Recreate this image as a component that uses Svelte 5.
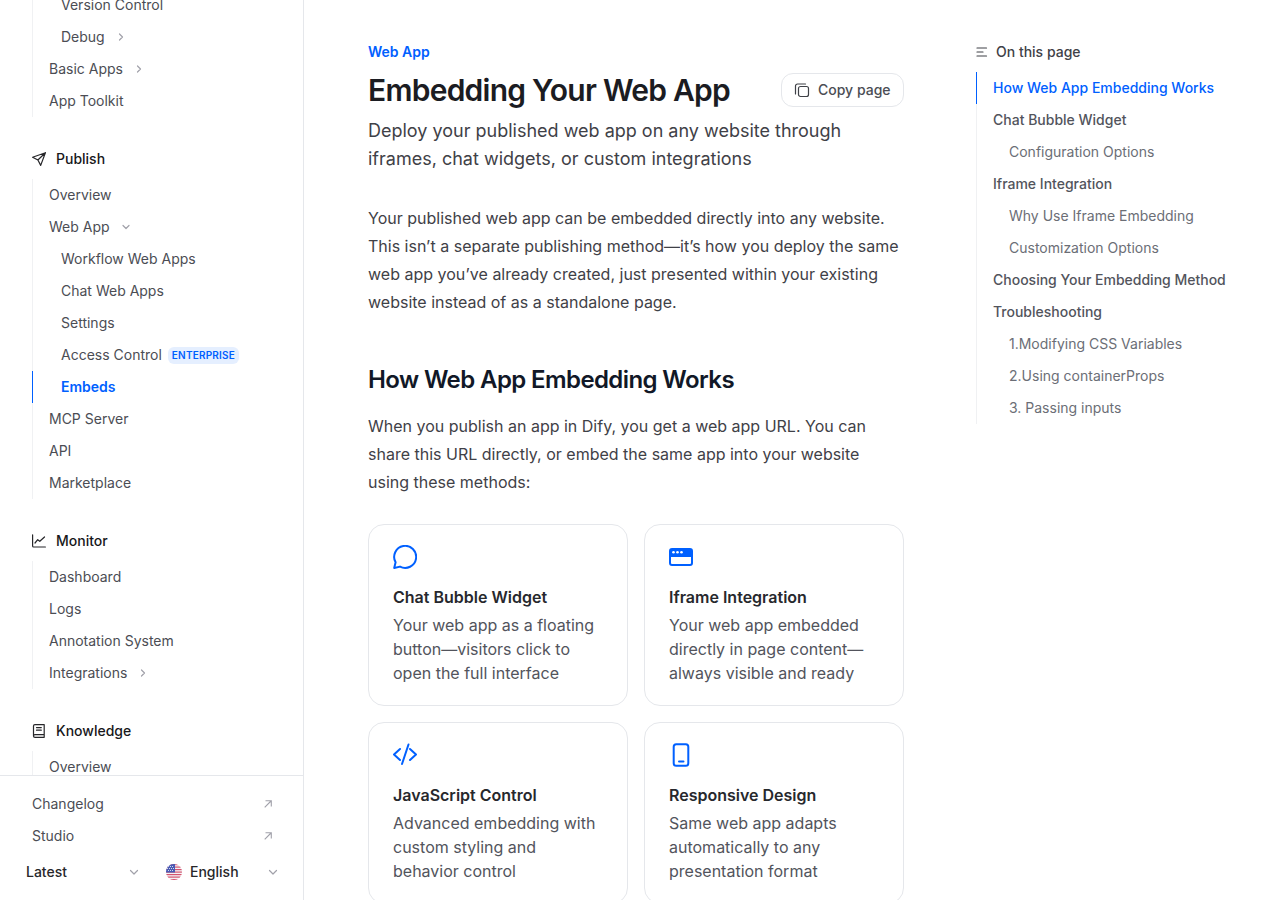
<script>
  const sections = [
    { items: [
      { t: 'Version Control', l: 2 }, { t: 'Debug', l: 2, c: 'r' }, { t: 'Basic Apps', c: 'r' }, { t: 'App Toolkit' }
    ] },
    { title: 'Publish', icon: 'send', items: [
      { t: 'Overview' }, { t: 'Web App', c: 'd' }, { t: 'Workflow Web Apps', l: 2 }, { t: 'Chat Web Apps', l: 2 }, { t: 'Settings', l: 2 },
      { t: 'Access Control', l: 2, badge: 'ENTERPRISE' }, { t: 'Embeds', l: 2, active: true }, { t: 'MCP Server' }, { t: 'API' }, { t: 'Marketplace' }
    ] },
    { title: 'Monitor', icon: 'chart', items: [
      { t: 'Dashboard' }, { t: 'Logs' }, { t: 'Annotation System' }, { t: 'Integrations', c: 'r' }
    ] },
    { title: 'Knowledge', icon: 'book', items: [{ t: 'Overview' }] }
  ];
  const toc = [
    { t: 'How Web App Embedding Works', active: true }, { t: 'Chat Bubble Widget' }, { t: 'Configuration Options', sub: true },
    { t: 'Iframe Integration' }, { t: 'Why Use Iframe Embedding', sub: true }, { t: 'Customization Options', sub: true },
    { t: 'Choosing Your Embedding Method' }, { t: 'Troubleshooting' }, { t: '1.Modifying CSS Variables', sub: true },
    { t: '2.Using containerProps', sub: true }, { t: '3. Passing inputs', sub: true }
  ];
  const cards = [
    { icon: 'chat', t: 'Chat Bubble Widget', d: 'Your web app as a floating button—visitors click to open the full interface' },
    { icon: 'frame', t: 'Iframe Integration', d: 'Your web app embedded directly in page content—always visible and ready' },
    { icon: 'code', t: 'JavaScript Control', d: 'Advanced embedding with custom styling and behavior control' },
    { icon: 'phone', t: 'Responsive Design', d: 'Same web app adapts automatically to any presentation format' }
  ];
</script>

<div class="page">
  <aside class="sidebar">
    <nav class="nav">
      {#each sections as s}
        <section class="section">
          {#if s.title}
            <div class="section-title">
              <svg class="section-icon" viewBox="0 0 14 14" fill="none" stroke="currentColor" stroke-width="1.2" stroke-linecap="round" stroke-linejoin="round">
                {#if s.icon === 'send'}
                  <path d="M13.4.7.6 5.300l5.300 2.700 2.800 5.400zM13.400.7 5.900 8" />
                {:else if s.icon === 'chart'}
                  <path d="M.6.8v11.200c0 .6.4 1 1 1h11.800" /><path d="M3 9 5.700 5.700l2.100 1.600L12.500 3" />
                {:else}
                  <path d="M1.500 11.800V2C1.500 1.200 2.100.6 2.900.6h9.300v10H3c-.9 0-1.500.6-1.500 1.300s.6 1.400 1.500 1.400h9.200v-2.700" /><path d="M4.500 3.600h4.800M4.500 6.200h4.800" />
                {/if}
              </svg>
              <span class="t">{s.title}</span>
            </div>
          {/if}
          <ul class="list">
            {#each s.items as it}
              <li class="item" class:lvl2={it.l === 2} class:active={it.active}>
                <span class="t">{it.t}</span>
                {#if it.badge}<span class="badge">{it.badge}</span>{/if}
                {#if it.c}
                  <svg class="chev" viewBox="0 0 16 16" fill="none" stroke="currentColor" stroke-width="1.2" stroke-linecap="round" stroke-linejoin="round">
                    <path d={it.c === 'r' ? 'M6.500 5l3 3-3 3' : 'M5 6.500l3 3 3-3'} />
                  </svg>
                {/if}
              </li>
            {/each}
          </ul>
        </section>
      {/each}
    </nav>
    <footer class="foot">
      {#each ['Changelog', 'Studio'] as l}
        <div class="foot-link">
          <span class="t">{l}</span>
          <svg class="ext" viewBox="0 0 8 8" fill="none" stroke="currentColor" stroke-width="1.100"><path d="M.7 7.300 7 1M1.500.7H7.300V6.500" /></svg>
        </div>
      {/each}
      <div class="selects">
        <div class="sel sel-version">
          <span class="t">Latest</span>
          <svg class="chev" viewBox="0 0 16 16" fill="none" stroke="currentColor" stroke-width="1.200" stroke-linecap="round" stroke-linejoin="round"><path d="M4.500 6.500 8 10l3.500-3.500" /></svg>
        </div>
        <div class="sel sel-lang">
          <svg class="flag" viewBox="0 0 16 16">
            <defs><clipPath id="flagc"><circle cx="8" cy="8" r="8" /></clipPath></defs>
            <g clip-path="url(#flagc)">
              <rect width="16" height="16" fill="#f3f3f5" />
              <rect y="0" width="16" height="1.200" fill="#d6536f" /><rect y="2.500" width="16" height="1.200" fill="#d6536f" />
              <rect y="5" width="16" height="1.200" fill="#d6536f" /><rect y="7.500" width="16" height="1.200" fill="#d6536f" />
              <rect y="10" width="16" height="1.200" fill="#d6536f" /><rect y="12.500" width="16" height="1.200" fill="#d6536f" />
              <rect y="15" width="16" height="1.200" fill="#d6536f" />
              <rect width="9" height="8.500" fill="#4a5bb5" />
              <g fill="#fff" opacity=".75">
                <rect x="2" y="2" width="1" height="1" /><rect x="4" y="2" width="1" height="1" /><rect x="6" y="2" width="1" height="1" />
                <rect x="1" y="4" width="1" height="1" /><rect x="3" y="4" width="1" height="1" /><rect x="5" y="4" width="1" height="1" /><rect x="7" y="4" width="1" height="1" />
                <rect x="2" y="6" width="1" height="1" /><rect x="4" y="6" width="1" height="1" /><rect x="6" y="6" width="1" height="1" />
              </g>
            </g>
          </svg>
          <span class="lang t">English</span>
          <svg class="chev" viewBox="0 0 16 16" fill="none" stroke="currentColor" stroke-width="1.200" stroke-linecap="round" stroke-linejoin="round"><path d="M4.500 6.500 8 10l3.500-3.500" /></svg>
        </div>
      </div>
    </footer>
  </aside>

  <main class="main">
    <div class="eyebrow">Web App</div>
    <div class="title-row">
      <h1>Embedding Your Web App</h1>
      <button class="copy">
        <svg viewBox="0 0 16 16" fill="none" stroke="currentColor" stroke-width="1.200" stroke-linecap="round" stroke-linejoin="round">
          <rect x="4.500" y="4.500" width="10" height="10" rx="2" /><path d="M11.500 2H3.500A2 2 0 0 0 1.500 4v8" />
        </svg>
        <span class="t">Copy page</span>
      </button>
    </div>
    <p class="lede">Deploy your published web app on any website through iframes, chat widgets, or custom integrations</p>
    <p class="para intro">Your published web app can be embedded directly into any website. This isn’t a separate publishing method—it’s how you deploy the same web app you’ve already created, just presented within your existing website instead of as a standalone page.</p>
    <h2>How Web App Embedding Works</h2>
    <p class="para">When you publish an app in Dify, you get a web app URL. You can share this URL directly, or embed the same app into your website using these methods:</p>
    <div class="cards">
      {#each cards as c}
        <article class="card">
          <svg class="card-icon" viewBox="0 0 24 24" fill="none" stroke="currentColor" stroke-width="2" stroke-linecap="round" stroke-linejoin="round">
            {#if c.icon === 'chat'}
              <path d="M1.200 23 7 21.600A11 11 0 1 0 2.600 17.300z" />
            {:else if c.icon === 'frame'}
              <path fill-rule="evenodd" stroke="none" fill="currentColor" d="M3 3h18a3 3 0 0 1 3 3v12a3 3 0 0 1-3 3H3a3 3 0 0 1-3-3V6a3 3 0 0 1 3-3zM2 12v6a1 1 0 0 0 1 1h18a1 1 0 0 0 1-1v-6z" />
              <circle cx="4.500" cy="7.300" r="1.300" fill="#fff" stroke="none" /><circle cx="8.500" cy="7.300" r="1.300" fill="#fff" stroke="none" /><circle cx="12.500" cy="7.300" r="1.300" fill="#fff" stroke="none" />
            {:else if c.icon === 'code'}
              <path d="M7 6 1 11.500 7 17M17 6l6 5.500-6 5.500M15.500 1.500 9 21" />
            {:else}
              <rect x="4.700" y="1.300" width="14.600" height="21.400" rx="2.500" /><path d="M10 18.500h4.500" />
            {/if}
          </svg>
          <h3>{c.t}</h3>
          <p>{c.d}</p>
        </article>
      {/each}
    </div>
  </main>

  <aside class="toc">
    <div class="toc-head">
      <svg viewBox="0 0 12 12" fill="none" stroke="currentColor" stroke-width="1.200" stroke-linecap="round"><path d="M1 2h9.500M1 6h6M1 10h9.500" /></svg>
      <span class="t">On this page</span>
    </div>
    <ul class="toc-list">
      {#each toc as t}
        <li class="toc-item" class:sub={t.sub} class:active={t.active}><span class="t">{t.t}</span></li>
      {/each}
    </ul>
  </aside>
</div>

<style>
  :global(body) { margin: 0; background: #fff; }
  * { box-sizing: border-box; }
  .page {
    display: flex; height: 900px; overflow: hidden;
    font-family: Inter, "Liberation Sans", sans-serif; color: #3f4147;
  }
  .t { padding-bottom: 2px; }
  .sidebar {
    flex: 0 0 304px; height: 900px; border-right: 1px solid #e5e7eb;
    display: flex; flex-direction: column; overflow: hidden;
  }
  .nav { flex: 1; min-height: 0; overflow: hidden; padding-left: 32px; }
  .section { margin-top: 26px; }
  .section:first-child { margin-top: -11px; }
  .section-title {
    display: flex; align-items: center; gap: 10px; height: 32px; margin-bottom: 4px;
    font-size: 14px; font-weight: 500; color: #18181b;
  }
  .section-icon { width: 14px; height: 14px; color: #27272a; flex: none; }
  .list { list-style: none; margin: 0; padding: 0; border-left: 1px solid #f0f1f3; }
  .item {
    display: flex; align-items: center; gap: 6px; height: 32px; padding-left: 16px; margin-left: -1px;
    border-left: 1px solid transparent; font-size: 14px; color: #4b4d54;
  }
  .item.lvl2 { padding-left: 28px; }
  .item.active { color: #0060ff; font-weight: 600; border-left-color: #0060ff; }
  .chev { width: 16px; height: 16px; color: #a1a1aa; margin-left: 2px; flex: none; }
  .badge {
    background: #e5efff; color: #0060ff; font-size: 10px; font-weight: 600; letter-spacing: 0.2px;
    line-height: 17px; height: 17px; padding: 0 4px; border-radius: 6px;
  }
  .foot { flex: none; height: 125px; border-top: 1px solid #e5e7eb; padding-top: 12px; background: #fff; }
  .foot-link {
    display: flex; align-items: center; justify-content: space-between; height: 32px;
    padding: 0 31px 0 32px; font-size: 14px; color: #4b4d54;
  }
  .ext { width: 8px; height: 8px; color: #a1a1aa; }
  .selects { display: flex; align-items: center; height: 40px; }
  .sel { display: flex; align-items: center; font-size: 14px; font-weight: 500; color: #27272a; }
  .sel-version { width: 166px; padding-left: 26px; justify-content: space-between; padding-right: 24px; }
  .sel-lang { flex: 1; padding-right: 22px; }
  .flag { width: 16px; height: 16px; margin-right: 8px; }
  .lang { flex: 1; }
  .main { flex: 0 0 536px; margin-left: 64px; padding-top: 42px; }
  .eyebrow { font-size: 14px; font-weight: 600; line-height: 20px; color: #0060ff; }
  .title-row { display: flex; justify-content: space-between; align-items: center; margin-top: 10px; height: 36px; }
  h1 { margin: 0; font-size: 30px; font-weight: 600; line-height: 36px; letter-spacing: -0.75px; color: #1b1c22; }
  .copy {
    display: flex; align-items: center; gap: 8px; height: 34px; width: 123px; padding: 0 12px; white-space: nowrap;
    background: #fff; border: 1px solid #e5e7eb; border-radius: 12px;
    font: 500 14px Inter, sans-serif; color: #4b4d54;
  }
  .copy svg { width: 16px; height: 16px; flex: none; color: #3f4147; }
  .lede { margin: 9px 0 0; font-size: 18px; line-height: 28px; color: #3f4147; }
  .para { margin: 0; font-size: 16px; line-height: 28px; color: #3f4147; }
  .intro { margin-top: 31px; }
  h2 { margin: 48px 0 16px; font-size: 24px; font-weight: 600; line-height: 32px; letter-spacing: -0.6px; color: #111827; }
  .cards { display: grid; grid-template-columns: 1fr 1fr; gap: 16px; margin-top: 28px; }
  .card { border: 1px solid #e5e7eb; border-radius: 16px; padding: 20px 24px; height: 182px; }
  .card-icon { display: block; width: 24px; height: 24px; color: #0060ff; }
  h3 { margin: 16px 0 0; font-size: 16px; font-weight: 600; line-height: 24px; color: #27282d; }
  .card p { margin: 4px 0 0; font-size: 16px; line-height: 24px; color: #52545c; }
  .toc { flex: 0 0 auto; margin-left: 72px; padding-top: 42px; width: 280px; }
  .toc-head { display: flex; align-items: center; gap: 8px; height: 20px; font-size: 14px; font-weight: 500; color: #3f4147; }
  .toc-head svg { width: 12px; height: 12px; }
  .toc-list { list-style: none; margin: 10px 0 0; padding: 0; border-left: 1px solid #f0f1f3; }
  .toc-item {
    display: flex; align-items: center; height: 32px; padding-left: 16px; margin-left: -1px;
    border-left: 1px solid transparent; font-size: 14px; font-weight: 500; color: #52545c;
  }
  .toc-item.sub { padding-left: 32px; font-weight: 400; color: #6b6e76; }
  .toc-item.active { color: #0060ff; border-left-color: #0060ff; }
</style>
